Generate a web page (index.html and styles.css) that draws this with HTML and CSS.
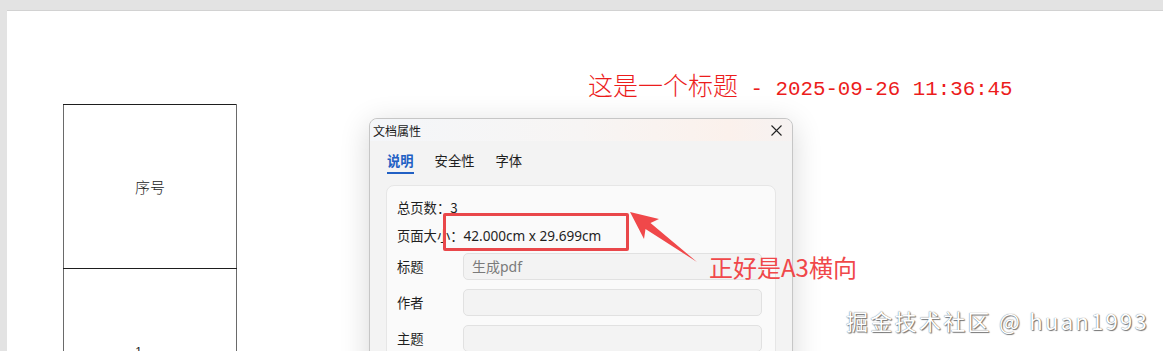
FILE: index.html
```html
<!DOCTYPE html>
<html lang="zh-CN">
<head>
<meta charset="utf-8">
<title>文档属性</title>
<link rel="stylesheet" href="styles.css">
</head>
<body>
<div class="page">
  <div class="doc-title"><span class="cjk">这是一个标题</span><span class="mono"> - 2025-09-26 11:36:45</span></div>
  <table class="grid">
    <tr><td class="head-cell">序号</td></tr>
    <tr><td class="body-cell">1</td></tr>
  </table>
</div>

<div class="dialog">
  <div class="dlg-header">
    <span class="dlg-title">文档属性</span>
    <svg class="close" width="11" height="11" viewBox="0 0 11 11"><path d="M0.5 0.5 L10.5 10.5 M10.5 0.5 L0.5 10.5" stroke="#222" stroke-width="1.1" fill="none"/></svg>
  </div>
  <div class="tabs">
    <span class="tab active">说明</span>
    <span class="tab">安全性</span>
    <span class="tab">字体</span>
  </div>
  <div class="panel">
    <div class="info">总页数：3</div>
    <div class="info">页面大小：<span class="val">42.000cm x 29.699cm</span></div>
    <div class="field"><span class="label">标题</span><div class="input">生成pdf</div></div>
    <div class="field"><span class="label">作者</span><div class="input"></div></div>
    <div class="field"><span class="label">主题</span><div class="input"></div></div>
  </div>
</div>

<div class="mark-box"></div>
<svg class="arrow" width="1163" height="351" viewBox="0 0 1163 351">
  <polygon points="630,212 659,219 650.5,223 697,262 645.5,229 644,239" fill="#f0484a"/>
</svg>
<div class="note">正好是A3横向</div>
<div class="watermark">掘金技术社区 @ huan1993</div>
</body>
</html>
```

FILE: styles.css
```css
html, body {
  margin: 0;
  padding: 0;
  height: 100%;
  overflow: hidden;
}
body {
  position: relative;
  background: #e3e3e3;
  font-family: "Noto Sans", "Noto Sans CJK SC", sans-serif;
}
.page {
  margin: 10px 0 0 7px;
  height: 400px;
  background: #ffffff;
  border-top: 1px solid #d2d2d2;
  padding-top: 59px;
  box-sizing: border-box;
}
.doc-title {
  margin-left: 581px;
  height: 28px;
  line-height: 28px;
  color: #ec1c1c;
  white-space: nowrap;
}
.doc-title .cjk {
  font-family: "Noto Sans CJK SC", sans-serif;
  font-size: 25px;
  font-weight: 300;
}
.doc-title .mono {
  font-family: "Liberation Mono", monospace;
  font-size: 20.8px;
}
.grid {
  margin: 6px 0 0 56px;
  border-collapse: collapse;
  width: 174px;
}
.grid td {
  border: 1px solid #1e1e1e;
  border-left-color: #6a6a6a;
  border-right-color: #6a6a6a;
  text-align: center;
  color: #222;
}
.head-cell {
  height: 161px;
  font-family: "Noto Sans CJK SC", serif;
  font-size: 15px;
  font-weight: 300;
}
.body-cell {
  height: 164px;
  font-family: "Liberation Sans", sans-serif;
  font-size: 12px;
  padding-right: 24px;
}

.dialog {
  position: absolute;
  left: 369px;
  top: 118px;
  width: 424px;
  height: 300px;
  box-sizing: border-box;
  border: 1px solid #c6c6c6;
  border-radius: 8px;
  background: #f3f3f3;
  box-shadow: 0 6px 30px rgba(0, 0, 0, 0.16);
  display: flex;
  flex-direction: column;
}
.dlg-header {
  height: 22px;
  display: flex;
  align-items: center;
  justify-content: space-between;
  padding: 0 10px 0 3px;
  border-radius: 8px 8px 0 0;
  background: linear-gradient(90deg, #f4f6f9 0%, #f7f5f4 50%, #fbf1ec 85%, #f6f2f1 100%);
}
.dlg-title {
  font-size: 12px;
  color: #1a1a1a;
  font-family: "Noto Sans CJK SC", sans-serif;
}
.tabs {
  display: flex;
  gap: 21px;
  padding-left: 17px;
  margin-top: 11px;
  font-family: "Noto Sans CJK SC", sans-serif;
  font-size: 13.3px;
}
.tab {
  line-height: 18px;
  padding-bottom: 2px;
  border-bottom: 2px solid transparent;
  color: #1f1f1f;
}
.tab.active {
  color: #2160c4;
  font-weight: 700;
  border-bottom-color: #2160c4;
}
.panel {
  margin: 11px 16px 0 16px;
  flex: 1;
  background: #fafafa;
  border: 1px solid #e6e6e6;
  border-radius: 8px;
  padding: 13px 13px 0 10px;
  font-size: 13.3px;
  color: #1f1f1f;
}
.info {
  line-height: 18px;
  margin-bottom: 10px;
  font-family: "Noto Sans CJK SC", sans-serif;
}
.info .val {
  font-family: "Noto Sans", sans-serif;
  font-size: 13.6px;
}
.info + .info {
  margin-bottom: 8px;
}
.field {
  display: flex;
  align-items: center;
  margin-bottom: 9px;
}
.label {
  width: 66px;
  font-family: "Noto Sans CJK SC", sans-serif;
}
.input {
  width: 299px;
  height: 27px;
  box-sizing: border-box;
  background: #f3f3f3;
  border: 1px solid #e1e1e1;
  border-radius: 5px;
  padding-left: 8px;
  line-height: 25px;
  color: #7a7a7a;
  font-family: "Noto Sans", "Noto Sans CJK SC", sans-serif;
  font-size: 14px;
}

.mark-box {
  position: absolute;
  left: 443px;
  top: 213px;
  width: 186px;
  height: 38px;
  box-sizing: border-box;
  border: 3px solid #e9474a;
  border-radius: 2px;
}
.arrow {
  position: absolute;
  left: 0;
  top: 0;
}
.note {
  position: absolute;
  left: 709px;
  top: 251px;
  font-family: "Noto Sans CJK SC", sans-serif;
  font-size: 24px;
  line-height: 32px;
  color: #f0484a;
  white-space: nowrap;
}
.watermark {
  position: absolute;
  left: 846px;
  top: 304px;
  font-family: "Noto Sans CJK SC", sans-serif;
  font-size: 22px;
  line-height: 32px;
  letter-spacing: 2.3px;
  color: #ffffff;
  white-space: nowrap;
  text-shadow: 0 0 1px #555, 1px 1px 1px #777;
}
```
